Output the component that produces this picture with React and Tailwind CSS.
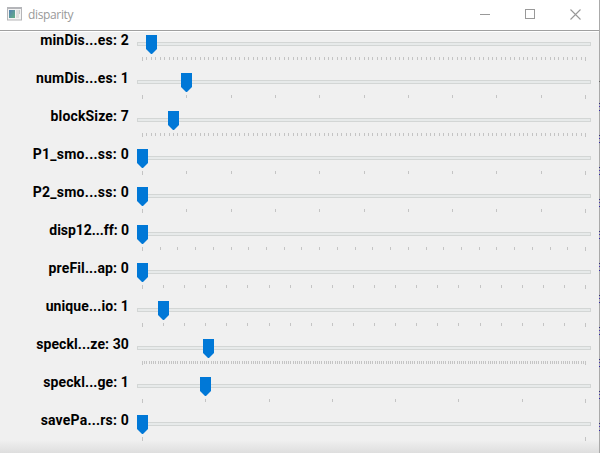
const TRAVEL = 443;

const sliders = [
  { label: 'minDis...es:', value: 2, max: 100, spacing: 'tracking-[0.2px]' },
  { label: 'numDis...es:', value: 1, max: 10, spacing: 'tracking-[0.2px]' },
  { label: 'blockSize:', value: 7, max: 100, spacing: 'tracking-[0.15px]' },
  { label: 'P1_smo...ss:', value: 0, max: 10, spacing: 'tracking-[0.27px]' },
  { label: 'P2_smo...ss:', value: 0, max: 10, spacing: 'tracking-[0.27px]' },
  { label: 'disp12...ff:', value: 0, max: 25, spacing: 'tracking-[-0.05px]' },
  { label: 'preFil...ap:', value: 0, max: 21, spacing: 'tracking-[0.13px]' },
  { label: 'unique...io:', value: 1, max: 21, spacing: 'tracking-[0.1px]' },
  { label: 'speckl...ze:', value: 30, max: 200, spacing: 'tracking-[0.1px]' },
  { label: 'speckl...ge:', value: 1, max: 7, spacing: 'tracking-[0.1px]' },
  { label: 'savePa...rs:', value: 0, max: 1, spacing: 'tracking-[0.2px]' },
];

const offsetOf = (value, max) => Math.round((value * TRAVEL) / max);

function Ticks({ max }) {
  const ticks = Array.from({ length: max + 1 }, (_, i) => i);
  return (
    <svg className="ml-[5px] mt-[11px] block" width="444" height="4" shapeRendering="crispEdges">
      {ticks.map((i) => (
        <rect key={i} x={offsetOf(i, max)} y="0" width="1" height={i === 0 || i === max ? 4 : 3} fill="#c4c4c4" />
      ))}
    </svg>
  );
}

function Slider({ label, value, max, spacing }) {
  return (
    <div className="flex h-[38px] shrink-0">
      <div className={`w-[129px] whitespace-nowrap text-right text-[14px] leading-4 font-bold text-black ${spacing}`}>
        {label} {value}
      </div>
      <div className="relative ml-2 w-[454px] pt-[10px]">
        <div className="h-1 border border-[#d3d6d5] bg-[#e7eaea]" />
        <Ticks max={max} />
        <svg className="absolute top-[3px]" style={{ left: offsetOf(value, max) }} width="11" height="19">
          <path d="M0 0H11V14L6 19H5L0 14Z" fill="#0078d7" />
        </svg>
      </div>
    </div>
  );
}

function TitleBar() {
  return (
    <div className="flex h-[30px] shrink-0 items-center bg-white">
      <svg className="ml-[7px] -mt-[2px]" width="15" height="14">
        <rect x="0.5" y="0.5" width="14" height="12.5" fill="#f4f4f4" stroke="#b5b5b8" />
        <rect x="0" y="0" width="15" height="2" fill="#b4b5b9" />
        <defs>
          <linearGradient id="pane" x1="0" y1="0" x2="1" y2="1">
            <stop offset="0" stopColor="#527fb3" />
            <stop offset="1" stopColor="#63b184" />
          </linearGradient>
        </defs>
        <rect x="2" y="3" width="6" height="8" fill="url(#pane)" />
        <rect x="9" y="3" width="3" height="8" fill="#dedede" />
        <rect x="12" y="3" width="1" height="4" fill="#c5cdca" />
      </svg>
      <span className="ml-[6px] font-['Open_Sans','Noto_Sans',sans-serif] text-[12px] leading-4 tracking-[-0.35px] text-[#999]">
        disparity
      </span>
      <div className="ml-auto mr-[18px] -mt-[2px] flex items-center gap-[35px]">
        <svg width="10" height="10"><rect y="5" width="10" height="1" fill="#999" /></svg>
        <svg width="10" height="10"><rect x="0.5" y="0.5" width="9" height="9" fill="none" stroke="#999" /></svg>
        <svg width="11" height="11"><path d="M0.5 0.5L10.5 10.5M10.5 0.5L0.5 10.5" stroke="#999" strokeWidth="1.1" /></svg>
      </div>
    </div>
  );
}

function WindowEdge() {
  const marks = Array.from({ length: 11 }, (_, i) => 103 + i * 32);
  return (
    <svg width="1" height="453" shapeRendering="crispEdges">
      <rect width="1" height="453" fill="#aaa" />
      <rect y="81" width="1" height="1" fill="#666" />
      {marks.map((y) => (
        <g key={y}>
          <rect y={y} width="1" height="1" fill="#35307c" />
          <rect y={y + 3} width="1" height="1" fill="#4a36b4" />
          <rect y={y + 7} width="1" height="1" fill="#3329a8" />
        </g>
      ))}
    </svg>
  );
}

export default function App() {
  return (
    <div className="flex h-[453px] w-[600px] overflow-hidden bg-[#f0f0f0] font-['Roboto','Liberation_Sans',sans-serif]">
      <div className="flex h-[453px] w-[599px] flex-col overflow-hidden bg-[linear-gradient(to_bottom,#f0f0f0_440px,#dedede_453px)]">
        <TitleBar />
        <div className="h-[2px] shrink-0 border-t border-[#a0a0a0] bg-white" />
        {sliders.map((s) => (
          <Slider key={s.label} {...s} />
        ))}
      </div>
      <WindowEdge />
    </div>
  );
}
